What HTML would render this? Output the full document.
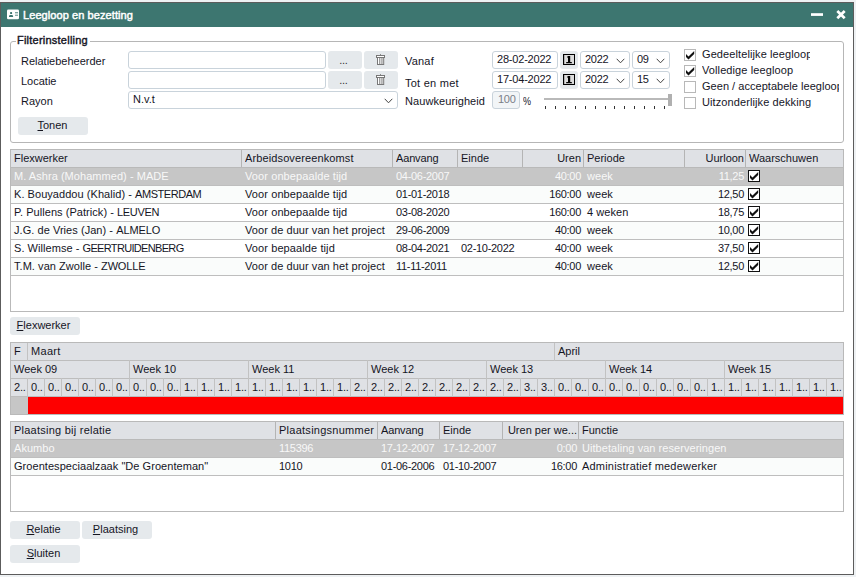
<!DOCTYPE html>
<html lang="nl"><head><meta charset="utf-8"><title>Leegloop en bezetting</title>
<style>
*{box-sizing:border-box;margin:0;padding:0}
html,body{width:856px;height:577px;overflow:hidden;background:#eef1f3}
body{position:relative;font-family:"Liberation Sans",sans-serif;font-size:11px;color:#15151f;line-height:14px}
.a{position:absolute;white-space:nowrap}
.win{left:0;top:2px;width:854px;height:573px;border:1px solid #5c5c5c;background:#fff}
.tb{left:1px;top:3px;width:852px;height:24px;background:#3d7670}
.tt{color:#fff;letter-spacing:0.08px;-webkit-text-stroke:0.45px #fff}
.fs{border:1px solid #b6b6b6;border-radius:3px}
.lg{background:#fff;letter-spacing:0.23px;-webkit-text-stroke:0.4px #15151f;padding:0 2px 0 1px}
.in{border:1px solid #c9d3db;border-radius:3px;background:#fff;height:18px}
.dis{background:#f2f5f7;color:#7a8088}
.bt{background:#e5e9ec;border-radius:3px;height:18px;text-align:center;line-height:17px;padding-right:3px}
.bt u{text-decoration:underline;text-underline-offset:1px}
.cb{width:12px;height:12px;border:1px solid #b8b8b8;background:#fff}
.cbk{width:12px;height:12px;border:1px solid #111;background:#fff}
.tbl{border:1px solid #b9b9b9;background:#fff;overflow:hidden}
.hd{background:#dfe1e5;border-bottom:1px solid #b9b9b9;left:0;top:0;height:18px}
.sep{width:1px;background:#b4b4b4;top:0;height:17px}
.row{left:0;height:18px;border-bottom:1px solid #bebebe}
.sel{background:#c6c6c6;color:#f8f8f8}
.alt{background:#fafcfb}
.r{text-align:right}
.clip{overflow:hidden}
svg{position:absolute;overflow:visible}
</style></head>
<body>
<div class="a win"></div>
<div class="a tb"></div>
<svg style="left:7px;top:9px" width="12" height="11" viewBox="0 0 12 11"><rect x="0" y="0.6" width="12" height="9.6" rx="1.3" fill="#fff"/><rect x="3.1" y="3.1" width="2" height="1.9" rx="0.6" fill="#3d7670"/><path d="M2 8V7.2C2 6.4 2.7 6 4.1 6S6.1 6.4 6.1 7.2V8z" fill="#3d7670"/><rect x="8" y="3.2" width="3" height="1.1" fill="#5d8d88"/><rect x="8" y="5.7" width="3" height="1" fill="#5d8d88"/></svg>
<div class="a tt" style="left:23px;top:8px">Leegloop en bezetting</div>
<svg style="left:811px;top:12px" width="12" height="5" viewBox="0 0 12 5"><rect x="0" y="1.2" width="12" height="2.7" fill="#fff"/></svg>
<svg style="left:836px;top:10px" width="10" height="9" viewBox="0 0 10 9"><path d="M1.3 1L8.7 8.3M8.7 1L1.3 8.3" stroke="#fff" stroke-width="2.7" fill="none"/></svg>
<div class="a fs" style="left:10px;top:41px;width:834px;height:102px"></div>
<div class="a lg" style="left:16px;top:33px">Filterinstelling</div>
<div class="a " style="left:21px;top:54px;">Relatiebeheerder</div>
<div class="a " style="left:21px;top:74px;">Locatie</div>
<div class="a " style="left:21px;top:94px;">Rayon</div>
<div class="a in" style="left:128px;top:51px;width:198px"></div>
<div class="a in" style="left:128px;top:71px;width:198px"></div>
<div class="a in" style="left:128px;top:91px;width:270px;padding-left:4px;line-height:15px">N.v.t</div>
<svg style="left:384px;top:98px" width="9" height="6" viewBox="0 0 9 6"><path d="M0.7 0.8L4.5 4.8L8.3 0.8" stroke="#444" stroke-width="1" fill="none"/></svg>
<div class="a bt" style="left:328px;top:51px;width:34px;line-height:18px;letter-spacing:-0.3px;padding-right:3px;color:#333">...</div>
<div class="a bt" style="left:364px;top:51px;width:34px"></div>
<svg style="left:376px;top:54px" width="9" height="11" viewBox="0 0 9 11"><rect x="4" y="0.2" width="1" height="1" fill="#777"/><rect x="0.5" y="1.5" width="8" height="2" fill="#fff" stroke="#777"/><rect x="1.5" y="3.5" width="6.2" height="7" fill="#fff" stroke="#777"/><rect x="3.35" y="4" width="0.9" height="6" fill="#6a6a6a"/><rect x="5.5" y="4" width="0.9" height="6" fill="#6a6a6a"/></svg>
<div class="a bt" style="left:328px;top:71px;width:34px;line-height:18px;letter-spacing:-0.3px;padding-right:3px;color:#333">...</div>
<div class="a bt" style="left:364px;top:71px;width:34px"></div>
<svg style="left:376px;top:74px" width="9" height="11" viewBox="0 0 9 11"><rect x="4" y="0.2" width="1" height="1" fill="#777"/><rect x="0.5" y="1.5" width="8" height="2" fill="#fff" stroke="#777"/><rect x="1.5" y="3.5" width="6.2" height="7" fill="#fff" stroke="#777"/><rect x="3.35" y="4" width="0.9" height="6" fill="#6a6a6a"/><rect x="5.5" y="4" width="0.9" height="6" fill="#6a6a6a"/></svg>
<div class="a bt" style="left:18px;top:117px;width:70px;padding-right:1px"><u>T</u>onen</div>
<div class="a " style="left:405px;top:54px;letter-spacing:.2px">Vanaf</div>
<div class="a " style="left:405px;top:76px;letter-spacing:.25px">Tot en met</div>
<div class="a " style="left:405px;top:94px;letter-spacing:.08px">Nauwkeurigheid</div>
<div class="a in" style="left:492px;top:51px;width:66px;padding-left:4px;line-height:15px;letter-spacing:-0.2px">28-02-2022</div>
<div class="a bt" style="left:560px;top:51px;width:18px"></div>
<svg style="left:563px;top:54px" width="12" height="11" viewBox="0 0 12 11"><rect x="0" y="0" width="12" height="11" fill="#000"/><rect x="1.2" y="1" width="9.8" height="9" fill="#dcdcdc"/><path d="M5 2H7.2V8H8.8V9.2H3.2V8H5V3.6H4V2.6H5z" fill="#000"/></svg>
<div class="a in" style="left:580px;top:51px;width:50px;padding-left:4px;line-height:15px;letter-spacing:-0.3px">2022</div>
<svg style="left:616px;top:58px" width="9" height="6" viewBox="0 0 9 6"><path d="M0.7 0.8L4.5 4.8L8.3 0.8" stroke="#444" stroke-width="1" fill="none"/></svg>
<div class="a in" style="left:632px;top:51px;width:38px;padding-left:4px;line-height:15px;letter-spacing:-0.3px">09</div>
<svg style="left:656px;top:58px" width="9" height="6" viewBox="0 0 9 6"><path d="M0.7 0.8L4.5 4.8L8.3 0.8" stroke="#444" stroke-width="1" fill="none"/></svg>
<div class="a in" style="left:492px;top:71px;width:66px;padding-left:4px;line-height:15px;letter-spacing:-0.2px">17-04-2022</div>
<div class="a bt" style="left:560px;top:71px;width:18px"></div>
<svg style="left:563px;top:74px" width="12" height="11" viewBox="0 0 12 11"><rect x="0" y="0" width="12" height="11" fill="#000"/><rect x="1.2" y="1" width="9.8" height="9" fill="#dcdcdc"/><path d="M5 2H7.2V8H8.8V9.2H3.2V8H5V3.6H4V2.6H5z" fill="#000"/></svg>
<div class="a in" style="left:580px;top:71px;width:50px;padding-left:4px;line-height:15px;letter-spacing:-0.3px">2022</div>
<svg style="left:616px;top:78px" width="9" height="6" viewBox="0 0 9 6"><path d="M0.7 0.8L4.5 4.8L8.3 0.8" stroke="#444" stroke-width="1" fill="none"/></svg>
<div class="a in" style="left:632px;top:71px;width:38px;padding-left:4px;line-height:15px;letter-spacing:-0.3px">15</div>
<svg style="left:656px;top:78px" width="9" height="6" viewBox="0 0 9 6"><path d="M0.7 0.8L4.5 4.8L8.3 0.8" stroke="#444" stroke-width="1" fill="none"/></svg>
<div class="a in dis" style="left:492px;top:91px;width:28px;padding-left:5px;line-height:15px;letter-spacing:-0.3px">100</div>
<div class="a " style="left:523px;top:94px;transform:scaleX(.82);transform-origin:0 0">%</div>
<div class="a" style="left:544px;top:98px;width:125px;height:2px;background:#b9b9b9"></div>
<div class="a" style="left:668px;top:94px;width:4px;height:12px;background:#b0b0b0"></div>
<div class="a" style="left:545px;top:106px;width:1px;height:3px;background:#333"></div>
<div class="a" style="left:555px;top:106px;width:1px;height:3px;background:#333"></div>
<div class="a" style="left:565px;top:106px;width:1px;height:3px;background:#333"></div>
<div class="a" style="left:575px;top:106px;width:1px;height:3px;background:#333"></div>
<div class="a" style="left:585px;top:106px;width:1px;height:3px;background:#333"></div>
<div class="a" style="left:595px;top:106px;width:1px;height:3px;background:#333"></div>
<div class="a" style="left:605px;top:106px;width:1px;height:3px;background:#333"></div>
<div class="a" style="left:614px;top:106px;width:1px;height:3px;background:#333"></div>
<div class="a" style="left:624px;top:106px;width:1px;height:3px;background:#333"></div>
<div class="a" style="left:634px;top:106px;width:1px;height:3px;background:#333"></div>
<div class="a" style="left:644px;top:106px;width:1px;height:3px;background:#333"></div>
<div class="a" style="left:654px;top:106px;width:1px;height:3px;background:#333"></div>
<div class="a" style="left:664px;top:106px;width:1px;height:3px;background:#333"></div>
<div class="a cb" style="left:684px;top:49px"></div>
<svg style="left:684px;top:49px" width="12" height="12" viewBox="0 0 12 12"><path d="M2 5L4.5 7.4L10.2 2V5L4.5 10.4L2 8z" fill="#111"/></svg>
<div class="a clip" style="left:702px;top:47px;width:108px;letter-spacing:0.1px">Gedeeltelijke leegloop</div>
<div class="a cb" style="left:684px;top:65px"></div>
<svg style="left:684px;top:65px" width="12" height="12" viewBox="0 0 12 12"><path d="M2 5L4.5 7.4L10.2 2V5L4.5 10.4L2 8z" fill="#111"/></svg>
<div class="a clip" style="left:702px;top:63px;width:141px;letter-spacing:0.1px">Volledige leegloop</div>
<div class="a cb" style="left:684px;top:81px"></div>
<div class="a clip" style="left:702px;top:79px;width:137px;letter-spacing:0.03px">Geen / acceptabele leegloop</div>
<div class="a cb" style="left:684px;top:97px"></div>
<div class="a clip" style="left:702px;top:95px;width:141px;letter-spacing:0.1px">Uitzonderlijke dekking</div>
<div class="a tbl" style="left:10px;top:149px;width:834px;height:163px">
<div class="a hd" style="width:832px"></div>
<div class="a clip" style="left:3px;top:1px;width:227px;letter-spacing:0px">Flexwerker</div>
<div class="a sep" style="left:230px"></div>
<div class="a clip" style="left:234px;top:1px;width:146px;letter-spacing:0.12px">Arbeidsovereenkomst</div>
<div class="a sep" style="left:381px"></div>
<div class="a clip" style="left:385px;top:1px;width:60px;letter-spacing:-0.15px">Aanvang</div>
<div class="a sep" style="left:446px"></div>
<div class="a clip" style="left:450px;top:1px;width:60px;letter-spacing:0px">Einde</div>
<div class="a sep" style="left:511px"></div>
<div class="a r clip" style="left:511px;top:1px;width:59px">Uren</div>
<div class="a sep" style="left:572px"></div>
<div class="a clip" style="left:576px;top:1px;width:96px;letter-spacing:0px">Periode</div>
<div class="a sep" style="left:673px"></div>
<div class="a r clip" style="left:673px;top:1px;width:60px">Uurloon</div>
<div class="a sep" style="left:734px"></div>
<div class="a clip" style="left:738px;top:1px;width:93px;letter-spacing:0px">Waarschuwen</div>
<div class="a row sel" style="top:18px;width:832px">
<div class="a" style="left:3px;top:1px;letter-spacing:0.05px">M. Ashra (Mohammed) - MADE</div>
<div class="a" style="left:234px;top:1px;letter-spacing:0.1px">Voor onbepaalde tijd</div>
<div class="a" style="left:385px;top:1px;letter-spacing:-0.3px">04-06-2007</div>
<div class="a r" style="left:511px;top:1px;width:59px;letter-spacing:-0.3px">40:00</div>
<div class="a" style="left:576px;top:1px;letter-spacing:0.05px">week</div>
<div class="a r" style="left:673px;top:1px;width:60px;letter-spacing:-0.3px">11,25</div>
<div class="a cbk" style="left:737px;top:2px"></div>
<svg style="left:737px;top:2px" width="12" height="12" viewBox="0 0 12 12"><path d="M2 5L4.5 7.4L10.2 2V5L4.5 10.4L2 8z" fill="#111"/></svg>
</div>
<div class="a row alt" style="top:36px;width:832px">
<div class="a" style="left:3px;top:1px;letter-spacing:0.05px">K. Bouyaddou (Khalid) - <span style="letter-spacing:-0.45px">AMSTERDAM</span></div>
<div class="a" style="left:234px;top:1px;letter-spacing:0.1px">Voor onbepaalde tijd</div>
<div class="a" style="left:385px;top:1px;letter-spacing:-0.3px">01-01-2018</div>
<div class="a r" style="left:511px;top:1px;width:59px;letter-spacing:-0.3px">160:00</div>
<div class="a" style="left:576px;top:1px;letter-spacing:0.05px">week</div>
<div class="a r" style="left:673px;top:1px;width:60px;letter-spacing:-0.3px">12,50</div>
<div class="a cbk" style="left:737px;top:2px"></div>
<svg style="left:737px;top:2px" width="12" height="12" viewBox="0 0 12 12"><path d="M2 5L4.5 7.4L10.2 2V5L4.5 10.4L2 8z" fill="#111"/></svg>
</div>
<div class="a row" style="top:54px;width:832px">
<div class="a" style="left:3px;top:1px;letter-spacing:0.05px">P. Pullens (Patrick) - <span style="letter-spacing:-0.33px">LEUVEN</span></div>
<div class="a" style="left:234px;top:1px;letter-spacing:0.1px">Voor onbepaalde tijd</div>
<div class="a" style="left:385px;top:1px;letter-spacing:-0.3px">03-08-2020</div>
<div class="a r" style="left:511px;top:1px;width:59px;letter-spacing:-0.3px">160:00</div>
<div class="a" style="left:576px;top:1px;letter-spacing:0.05px">4 weken</div>
<div class="a r" style="left:673px;top:1px;width:60px;letter-spacing:-0.3px">18,75</div>
<div class="a cbk" style="left:737px;top:2px"></div>
<svg style="left:737px;top:2px" width="12" height="12" viewBox="0 0 12 12"><path d="M2 5L4.5 7.4L10.2 2V5L4.5 10.4L2 8z" fill="#111"/></svg>
</div>
<div class="a row alt" style="top:72px;width:832px">
<div class="a" style="left:3px;top:1px;letter-spacing:0.05px">J.G. de Vries (Jan) - <span style="letter-spacing:-0.1px">ALMELO</span></div>
<div class="a" style="left:234px;top:1px;letter-spacing:0.06px">Voor de duur van het project</div>
<div class="a" style="left:385px;top:1px;letter-spacing:-0.3px">29-06-2009</div>
<div class="a r" style="left:511px;top:1px;width:59px;letter-spacing:-0.3px">40:00</div>
<div class="a" style="left:576px;top:1px;letter-spacing:0.05px">week</div>
<div class="a r" style="left:673px;top:1px;width:60px;letter-spacing:-0.3px">10,00</div>
<div class="a cbk" style="left:737px;top:2px"></div>
<svg style="left:737px;top:2px" width="12" height="12" viewBox="0 0 12 12"><path d="M2 5L4.5 7.4L10.2 2V5L4.5 10.4L2 8z" fill="#111"/></svg>
</div>
<div class="a row" style="top:90px;width:832px">
<div class="a" style="left:3px;top:1px;letter-spacing:0.05px">S. Willemse - <span style="letter-spacing:-0.67px">GEERTRUIDENBERG</span></div>
<div class="a" style="left:234px;top:1px;letter-spacing:0.1px">Voor bepaalde tijd</div>
<div class="a" style="left:385px;top:1px;letter-spacing:-0.3px">08-04-2021</div>
<div class="a" style="left:450px;top:1px;letter-spacing:-0.3px">02-10-2022</div>
<div class="a r" style="left:511px;top:1px;width:59px;letter-spacing:-0.3px">40:00</div>
<div class="a" style="left:576px;top:1px;letter-spacing:0.05px">week</div>
<div class="a r" style="left:673px;top:1px;width:60px;letter-spacing:-0.3px">37,50</div>
<div class="a cbk" style="left:737px;top:2px"></div>
<svg style="left:737px;top:2px" width="12" height="12" viewBox="0 0 12 12"><path d="M2 5L4.5 7.4L10.2 2V5L4.5 10.4L2 8z" fill="#111"/></svg>
</div>
<div class="a row alt" style="top:108px;width:832px">
<div class="a" style="left:3px;top:1px;letter-spacing:0.05px">T.M. van Zwolle - <span style="letter-spacing:-0.17px">ZWOLLE</span></div>
<div class="a" style="left:234px;top:1px;letter-spacing:0.06px">Voor de duur van het project</div>
<div class="a" style="left:385px;top:1px;letter-spacing:-0.3px">11-11-2011</div>
<div class="a r" style="left:511px;top:1px;width:59px;letter-spacing:-0.3px">40:00</div>
<div class="a" style="left:576px;top:1px;letter-spacing:0.05px">week</div>
<div class="a r" style="left:673px;top:1px;width:60px;letter-spacing:-0.3px">12,50</div>
<div class="a cbk" style="left:737px;top:2px"></div>
<svg style="left:737px;top:2px" width="12" height="12" viewBox="0 0 12 12"><path d="M2 5L4.5 7.4L10.2 2V5L4.5 10.4L2 8z" fill="#111"/></svg>
</div>
</div>
<div class="a bt" style="left:10px;top:317px;width:70px"><u>F</u>lexwerker</div>
<div class="a tbl" style="left:10px;top:342px;width:834px;height:73px;background:#dfe1e5">
<div class="a" style="left:0;top:17px;width:832px;height:1px;background:#bdbdbd"></div>
<div class="a" style="left:0;top:35px;width:832px;height:1px;background:#bdbdbd"></div>
<div class="a" style="left:0;top:53px;width:832px;height:1px;background:#bdbdbd"></div>
<div class="a" style="left:3px;top:1px">F</div>
<div class="a sep" style="left:16px;height:18px;background:#c2c2c2"></div>
<div class="a" style="left:20px;top:1px;letter-spacing:.3px">Maart</div>
<div class="a sep" style="left:543px;height:18px;background:#c2c2c2"></div>
<div class="a" style="left:547px;top:1px">April</div>
<div class="a" style="left:3px;top:19px">Week 09</div>
<div class="a sep" style="left:118px;top:17px;height:19px;background:#c2c2c2"></div>
<div class="a" style="left:122px;top:19px">Week 10</div>
<div class="a sep" style="left:237px;top:17px;height:19px;background:#c2c2c2"></div>
<div class="a" style="left:241px;top:19px">Week 11</div>
<div class="a sep" style="left:356px;top:17px;height:19px;background:#c2c2c2"></div>
<div class="a" style="left:360px;top:19px">Week 12</div>
<div class="a sep" style="left:475px;top:17px;height:19px;background:#c2c2c2"></div>
<div class="a" style="left:479px;top:19px">Week 13</div>
<div class="a sep" style="left:594px;top:17px;height:19px;background:#c2c2c2"></div>
<div class="a" style="left:598px;top:19px">Week 14</div>
<div class="a sep" style="left:713px;top:17px;height:19px;background:#c2c2c2"></div>
<div class="a" style="left:717px;top:19px">Week 15</div>
<div class="a" style="left:3px;top:37px;letter-spacing:-0.2px">2..</div>
<div class="a sep" style="left:16px;top:35px;height:19px;background:#c2c2c2"></div>
<div class="a" style="left:20px;top:37px;letter-spacing:-0.2px">0..</div>
<div class="a sep" style="left:33px;top:35px;height:19px;background:#c2c2c2"></div>
<div class="a" style="left:37px;top:37px;letter-spacing:-0.2px">0..</div>
<div class="a sep" style="left:50px;top:35px;height:19px;background:#c2c2c2"></div>
<div class="a" style="left:54px;top:37px;letter-spacing:-0.2px">0..</div>
<div class="a sep" style="left:67px;top:35px;height:19px;background:#c2c2c2"></div>
<div class="a" style="left:71px;top:37px;letter-spacing:-0.2px">0..</div>
<div class="a sep" style="left:84px;top:35px;height:19px;background:#c2c2c2"></div>
<div class="a" style="left:88px;top:37px;letter-spacing:-0.2px">0..</div>
<div class="a sep" style="left:101px;top:35px;height:19px;background:#c2c2c2"></div>
<div class="a" style="left:105px;top:37px;letter-spacing:-0.2px">0..</div>
<div class="a sep" style="left:118px;top:35px;height:19px;background:#c2c2c2"></div>
<div class="a" style="left:122px;top:37px;letter-spacing:-0.2px">0..</div>
<div class="a sep" style="left:135px;top:35px;height:19px;background:#c2c2c2"></div>
<div class="a" style="left:139px;top:37px;letter-spacing:-0.2px">0..</div>
<div class="a sep" style="left:152px;top:35px;height:19px;background:#c2c2c2"></div>
<div class="a" style="left:156px;top:37px;letter-spacing:-0.2px">0..</div>
<div class="a sep" style="left:169px;top:35px;height:19px;background:#c2c2c2"></div>
<div class="a" style="left:173px;top:37px;letter-spacing:-0.2px">1..</div>
<div class="a sep" style="left:186px;top:35px;height:19px;background:#c2c2c2"></div>
<div class="a" style="left:190px;top:37px;letter-spacing:-0.2px">1..</div>
<div class="a sep" style="left:203px;top:35px;height:19px;background:#c2c2c2"></div>
<div class="a" style="left:207px;top:37px;letter-spacing:-0.2px">1..</div>
<div class="a sep" style="left:220px;top:35px;height:19px;background:#c2c2c2"></div>
<div class="a" style="left:224px;top:37px;letter-spacing:-0.2px">1..</div>
<div class="a sep" style="left:237px;top:35px;height:19px;background:#c2c2c2"></div>
<div class="a" style="left:241px;top:37px;letter-spacing:-0.2px">1..</div>
<div class="a sep" style="left:254px;top:35px;height:19px;background:#c2c2c2"></div>
<div class="a" style="left:258px;top:37px;letter-spacing:-0.2px">1..</div>
<div class="a sep" style="left:271px;top:35px;height:19px;background:#c2c2c2"></div>
<div class="a" style="left:275px;top:37px;letter-spacing:-0.2px">1..</div>
<div class="a sep" style="left:288px;top:35px;height:19px;background:#c2c2c2"></div>
<div class="a" style="left:292px;top:37px;letter-spacing:-0.2px">1..</div>
<div class="a sep" style="left:305px;top:35px;height:19px;background:#c2c2c2"></div>
<div class="a" style="left:309px;top:37px;letter-spacing:-0.2px">1..</div>
<div class="a sep" style="left:322px;top:35px;height:19px;background:#c2c2c2"></div>
<div class="a" style="left:326px;top:37px;letter-spacing:-0.2px">1..</div>
<div class="a sep" style="left:339px;top:35px;height:19px;background:#c2c2c2"></div>
<div class="a" style="left:343px;top:37px;letter-spacing:-0.2px">2..</div>
<div class="a sep" style="left:356px;top:35px;height:19px;background:#c2c2c2"></div>
<div class="a" style="left:360px;top:37px;letter-spacing:-0.2px">2..</div>
<div class="a sep" style="left:373px;top:35px;height:19px;background:#c2c2c2"></div>
<div class="a" style="left:377px;top:37px;letter-spacing:-0.2px">2..</div>
<div class="a sep" style="left:390px;top:35px;height:19px;background:#c2c2c2"></div>
<div class="a" style="left:394px;top:37px;letter-spacing:-0.2px">2..</div>
<div class="a sep" style="left:407px;top:35px;height:19px;background:#c2c2c2"></div>
<div class="a" style="left:411px;top:37px;letter-spacing:-0.2px">2..</div>
<div class="a sep" style="left:424px;top:35px;height:19px;background:#c2c2c2"></div>
<div class="a" style="left:428px;top:37px;letter-spacing:-0.2px">2..</div>
<div class="a sep" style="left:441px;top:35px;height:19px;background:#c2c2c2"></div>
<div class="a" style="left:445px;top:37px;letter-spacing:-0.2px">2..</div>
<div class="a sep" style="left:458px;top:35px;height:19px;background:#c2c2c2"></div>
<div class="a" style="left:462px;top:37px;letter-spacing:-0.2px">2..</div>
<div class="a sep" style="left:475px;top:35px;height:19px;background:#c2c2c2"></div>
<div class="a" style="left:479px;top:37px;letter-spacing:-0.2px">2..</div>
<div class="a sep" style="left:492px;top:35px;height:19px;background:#c2c2c2"></div>
<div class="a" style="left:496px;top:37px;letter-spacing:-0.2px">2..</div>
<div class="a sep" style="left:509px;top:35px;height:19px;background:#c2c2c2"></div>
<div class="a" style="left:513px;top:37px;letter-spacing:-0.2px">3..</div>
<div class="a sep" style="left:526px;top:35px;height:19px;background:#c2c2c2"></div>
<div class="a" style="left:530px;top:37px;letter-spacing:-0.2px">3..</div>
<div class="a sep" style="left:543px;top:35px;height:19px;background:#c2c2c2"></div>
<div class="a" style="left:547px;top:37px;letter-spacing:-0.2px">0..</div>
<div class="a sep" style="left:560px;top:35px;height:19px;background:#c2c2c2"></div>
<div class="a" style="left:564px;top:37px;letter-spacing:-0.2px">0..</div>
<div class="a sep" style="left:577px;top:35px;height:19px;background:#c2c2c2"></div>
<div class="a" style="left:581px;top:37px;letter-spacing:-0.2px">0..</div>
<div class="a sep" style="left:594px;top:35px;height:19px;background:#c2c2c2"></div>
<div class="a" style="left:598px;top:37px;letter-spacing:-0.2px">0..</div>
<div class="a sep" style="left:611px;top:35px;height:19px;background:#c2c2c2"></div>
<div class="a" style="left:615px;top:37px;letter-spacing:-0.2px">0..</div>
<div class="a sep" style="left:628px;top:35px;height:19px;background:#c2c2c2"></div>
<div class="a" style="left:632px;top:37px;letter-spacing:-0.2px">0..</div>
<div class="a sep" style="left:645px;top:35px;height:19px;background:#c2c2c2"></div>
<div class="a" style="left:649px;top:37px;letter-spacing:-0.2px">0..</div>
<div class="a sep" style="left:662px;top:35px;height:19px;background:#c2c2c2"></div>
<div class="a" style="left:666px;top:37px;letter-spacing:-0.2px">0..</div>
<div class="a sep" style="left:679px;top:35px;height:19px;background:#c2c2c2"></div>
<div class="a" style="left:683px;top:37px;letter-spacing:-0.2px">0..</div>
<div class="a sep" style="left:696px;top:35px;height:19px;background:#c2c2c2"></div>
<div class="a" style="left:700px;top:37px;letter-spacing:-0.2px">1..</div>
<div class="a sep" style="left:713px;top:35px;height:19px;background:#c2c2c2"></div>
<div class="a" style="left:717px;top:37px;letter-spacing:-0.2px">1..</div>
<div class="a sep" style="left:730px;top:35px;height:19px;background:#c2c2c2"></div>
<div class="a" style="left:734px;top:37px;letter-spacing:-0.2px">1..</div>
<div class="a sep" style="left:747px;top:35px;height:19px;background:#c2c2c2"></div>
<div class="a" style="left:751px;top:37px;letter-spacing:-0.2px">1..</div>
<div class="a sep" style="left:764px;top:35px;height:19px;background:#c2c2c2"></div>
<div class="a" style="left:768px;top:37px;letter-spacing:-0.2px">1..</div>
<div class="a sep" style="left:781px;top:35px;height:19px;background:#c2c2c2"></div>
<div class="a" style="left:785px;top:37px;letter-spacing:-0.2px">1..</div>
<div class="a sep" style="left:798px;top:35px;height:19px;background:#c2c2c2"></div>
<div class="a" style="left:802px;top:37px;letter-spacing:-0.2px">1..</div>
<div class="a sep" style="left:815px;top:35px;height:19px;background:#c2c2c2"></div>
<div class="a" style="left:819px;top:37px;letter-spacing:-0.2px">1..</div>
<div class="a" style="left:0;top:54px;width:17px;height:17px;background:#c6c6c6"></div>
<div class="a" style="left:17px;top:54px;width:815px;height:17px;background:#fe0000"></div>
</div>
<div class="a tbl" style="left:10px;top:421px;width:834px;height:91px">
<div class="a hd" style="width:832px"></div>
<div class="a clip" style="left:3px;top:1px;width:261px;letter-spacing:0.24px">Plaatsing bij relatie</div>
<div class="a sep" style="left:264px"></div>
<div class="a clip" style="left:268px;top:1px;width:97px;letter-spacing:0.26px">Plaatsingsnummer</div>
<div class="a sep" style="left:366px"></div>
<div class="a clip" style="left:370px;top:1px;width:57px;letter-spacing:-0.15px">Aanvang</div>
<div class="a sep" style="left:428px"></div>
<div class="a clip" style="left:432px;top:1px;width:58px;letter-spacing:0px">Einde</div>
<div class="a sep" style="left:491px"></div>
<div class="a r clip" style="left:491px;top:1px;width:75px">Uren per we...</div>
<div class="a sep" style="left:567px"></div>
<div class="a clip" style="left:571px;top:1px;width:261px;letter-spacing:0px">Functie</div>
<div class="a row sel" style="top:18px;width:832px">
<div class="a" style="left:3px;top:1px;letter-spacing:0.05px">Akumbo</div>
<div class="a" style="left:268px;top:1px;letter-spacing:-0.3px">115396</div>
<div class="a" style="left:370px;top:1px;letter-spacing:-0.3px">17-12-2007</div>
<div class="a" style="left:432px;top:1px;letter-spacing:-0.3px">17-12-2007</div>
<div class="a r" style="left:491px;top:1px;width:75px;letter-spacing:-0.3px">0:00</div>
<div class="a" style="left:571px;top:1px;letter-spacing:0.05px">Uitbetaling van reserveringen</div>
</div>
<div class="a row alt" style="top:36px;width:832px">
<div class="a" style="left:3px;top:1px;letter-spacing:0.05px">Groentespeciaalzaak "De Groenteman"</div>
<div class="a" style="left:268px;top:1px;letter-spacing:-0.3px">1010</div>
<div class="a" style="left:370px;top:1px;letter-spacing:-0.3px">01-06-2006</div>
<div class="a" style="left:432px;top:1px;letter-spacing:-0.3px">01-10-2007</div>
<div class="a r" style="left:491px;top:1px;width:75px;letter-spacing:-0.3px">16:00</div>
<div class="a" style="left:571px;top:1px;letter-spacing:0.2px">Administratief medewerker</div>
</div>
</div>
<div class="a bt" style="left:10px;top:521px;width:70px"><u>R</u>elatie</div>
<div class="a bt" style="left:82px;top:521px;width:70px"><u>P</u>laatsing</div>
<div class="a bt" style="left:10px;top:545px;width:70px"><u>S</u>luiten</div>
</body></html>
